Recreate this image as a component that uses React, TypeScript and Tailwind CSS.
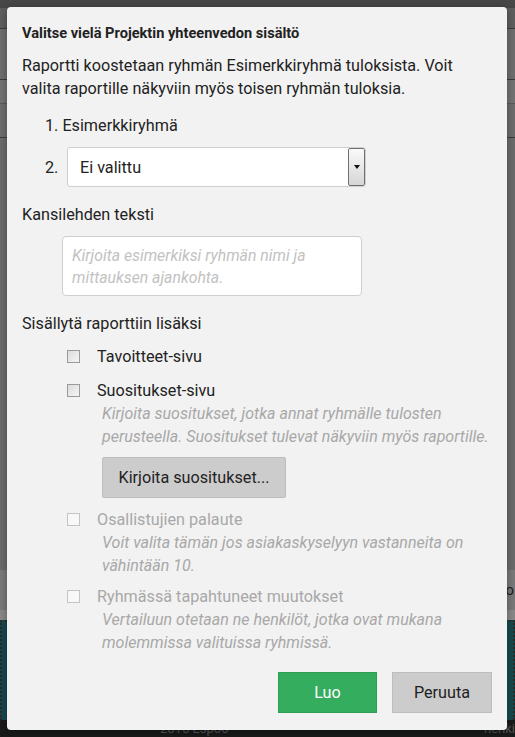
import React from 'react';

const font = { fontFamily: 'Roboto, "Noto Sans", sans-serif' };

function Check({ disabled }: { disabled?: boolean }) {
  return (
    <span
      className={
        disabled
          ? 'block w-[13px] h-[13px] border border-[#c4c4c4] bg-[#f8f8f8]'
          : 'block w-[13px] h-[13px] border border-[#9a9a9a] bg-gradient-to-br from-[#dcdcdc] to-[#f4f4f4]'
      }
    />
  );
}

function Option({
  label,
  help,
  disabled,
  children,
}: {
  label: string;
  help?: string[];
  disabled?: boolean;
  children?: React.ReactNode;
}) {
  return (
    <div className="pl-[45px]">
      <div className="flex items-center h-[23px]">
        <Check disabled={disabled} />
        <span className={'ml-[17px] ' + (disabled ? 'text-[#a8a8a8]' : 'text-[#222]')}>{label}</span>
      </div>
      {help && (
        <div className="pl-[35px] italic text-[16px] leading-[23px] text-[#a8a8a8] whitespace-nowrap">
          {help.map((l) => (
            <div key={l}>{l}</div>
          ))}
        </div>
      )}
      {children}
    </div>
  );
}

export default function App() {
  return (
    <div className="relative w-[515px] h-[737px] overflow-hidden bg-[#6e6e6e]" style={font}>
      {/* Page behind the overlay */}
      <div className="flex flex-col h-full">
        <div className="h-[8px] bg-[#474747]" />
        <div className="h-[20px] bg-[#5f5f5f]" />
        <div className="h-[51px] bg-[#6f6f6f] border-t border-[#3c3c3c]" />
        <div className="h-[24px] bg-[#747474] border-t border-[#3c3c3c]" />
        <div className="h-[34px] bg-[#6e6e6e] border-t border-[#5a5a5a]" />
        <div className="flex-1 bg-[#6c6c6c] border-t border-[#3c3c3c]" />
        <div className="h-[40px] bg-[#7a7a7a] flex items-center justify-end pr-[1px] text-[#222] text-[15px]">o</div>
        <div className="h-[10px] bg-[#8a8a8a]" />
        <div className="h-[100px] bg-[#174a4f] border-x-2 border-dotted border-[#2a2a2a] border-t-2 border-t-[#2d2d2d]" />
        <div className="h-[17px] bg-[#191b1b] flex items-start text-[13px] leading-[17px] text-[#555]">
          <span className="ml-[160px]">2016 Espoo</span>
          <span className="ml-auto">henki</span>
        </div>
      </div>

      {/* Modal */}
      <div className="absolute left-[7px] top-[7px] w-[500px] h-[723px] rounded-[4px] bg-[#f2f2f2] shadow-[0_2px_10px_rgba(0,0,0,0.35)] px-[15px] pt-[16px] text-[16.2px] leading-[23px] text-[#222]">
        <h2 className="text-[14.6px] leading-[20px] font-bold text-[#222]">Valitse vielä Projektin yhteenvedon sisältö</h2>

        <p className="mt-[11px] whitespace-nowrap">
          Raportti koostetaan ryhmän Esimerkkiryhmä tuloksista. Voit
          <br />
          valita raportille näkyviin myös toisen ryhmän tuloksia.
        </p>

        <div className="mt-[14px] pl-[23px]">1. Esimerkkiryhmä</div>

        <div className="mt-[10px] pl-[23px] flex items-center">
          <span className="w-[22px]">2.</span>
          <div className="flex w-[299px] h-[40px] bg-white border border-[#cfcfcf] rounded-[3px] overflow-hidden">
            <span className="flex-1 flex items-center pl-[12px]">Ei valittu</span>
            <span className="w-[17px] h-full border border-[#6f6f6f] rounded-[2px] bg-gradient-to-b from-[#fafafa] to-[#d6d6d6] flex items-center justify-center">
              <span className="block w-0 h-0 border-x-[3.5px] border-x-transparent border-t-[4px] border-t-[#111]" />
            </span>
          </div>
        </div>

        <div className="mt-[16px]">Kansilehden teksti</div>

        <div className="mt-[10px] ml-[40px] w-[300px] h-[60px] bg-white border border-[#cfcfcf] rounded-[4px] px-[9px] pt-[8px] italic text-[15.8px] leading-[22px] text-[#c2c2c2] whitespace-nowrap">
          Kirjoita esimerkiksi ryhmän nimi ja
          <br />
          mittauksen ajankohta.
        </div>

        <div className="mt-[16px]">Sisällytä raporttiin lisäksi</div>

        <div className="mt-[10px] flex flex-col">
          <Option label="Tavoitteet-sivu" />
          <div className="mt-[11px]">
            <Option
              label="Suositukset-sivu"
              help={[
                'Kirjoita suositukset, jotka annat ryhmälle tulosten',
                'perusteella. Suositukset tulevat näkyviin myös raportille.',
              ]}
            >
              <button className="mt-[9px] ml-[35px] w-[184px] h-[41px] bg-[#cccccc] border border-[#bdbdbd] rounded-[2px] text-[#222] text-[16.2px]">
                Kirjoita suositukset...
              </button>
            </Option>
          </div>
          <div className="mt-[10px]">
            <Option
              disabled
              label="Osallistujien palaute"
              help={['Voit valita tämän jos asiakaskyselyyn vastanneita on', 'vähintään 10.']}
            />
          </div>
          <div className="mt-[8px]">
            <Option
              disabled
              label="Ryhmässä tapahtuneet muutokset"
              help={['Vertailuun otetaan ne henkilöt, jotka ovat mukana', 'molemmissa valituissa ryhmissä.']}
            />
          </div>
        </div>

        <div className="mt-[18px] flex justify-end gap-[15px]">
          <button className="w-[99px] h-[41px] bg-[#35ad5f] border border-[#2f9d55] text-white text-[16.2px]">Luo</button>
          <button className="w-[100px] h-[41px] bg-[#cccccc] border border-[#bdbdbd] text-[#222] text-[16.2px]">Peruuta</button>
        </div>
      </div>
    </div>
  );
}
